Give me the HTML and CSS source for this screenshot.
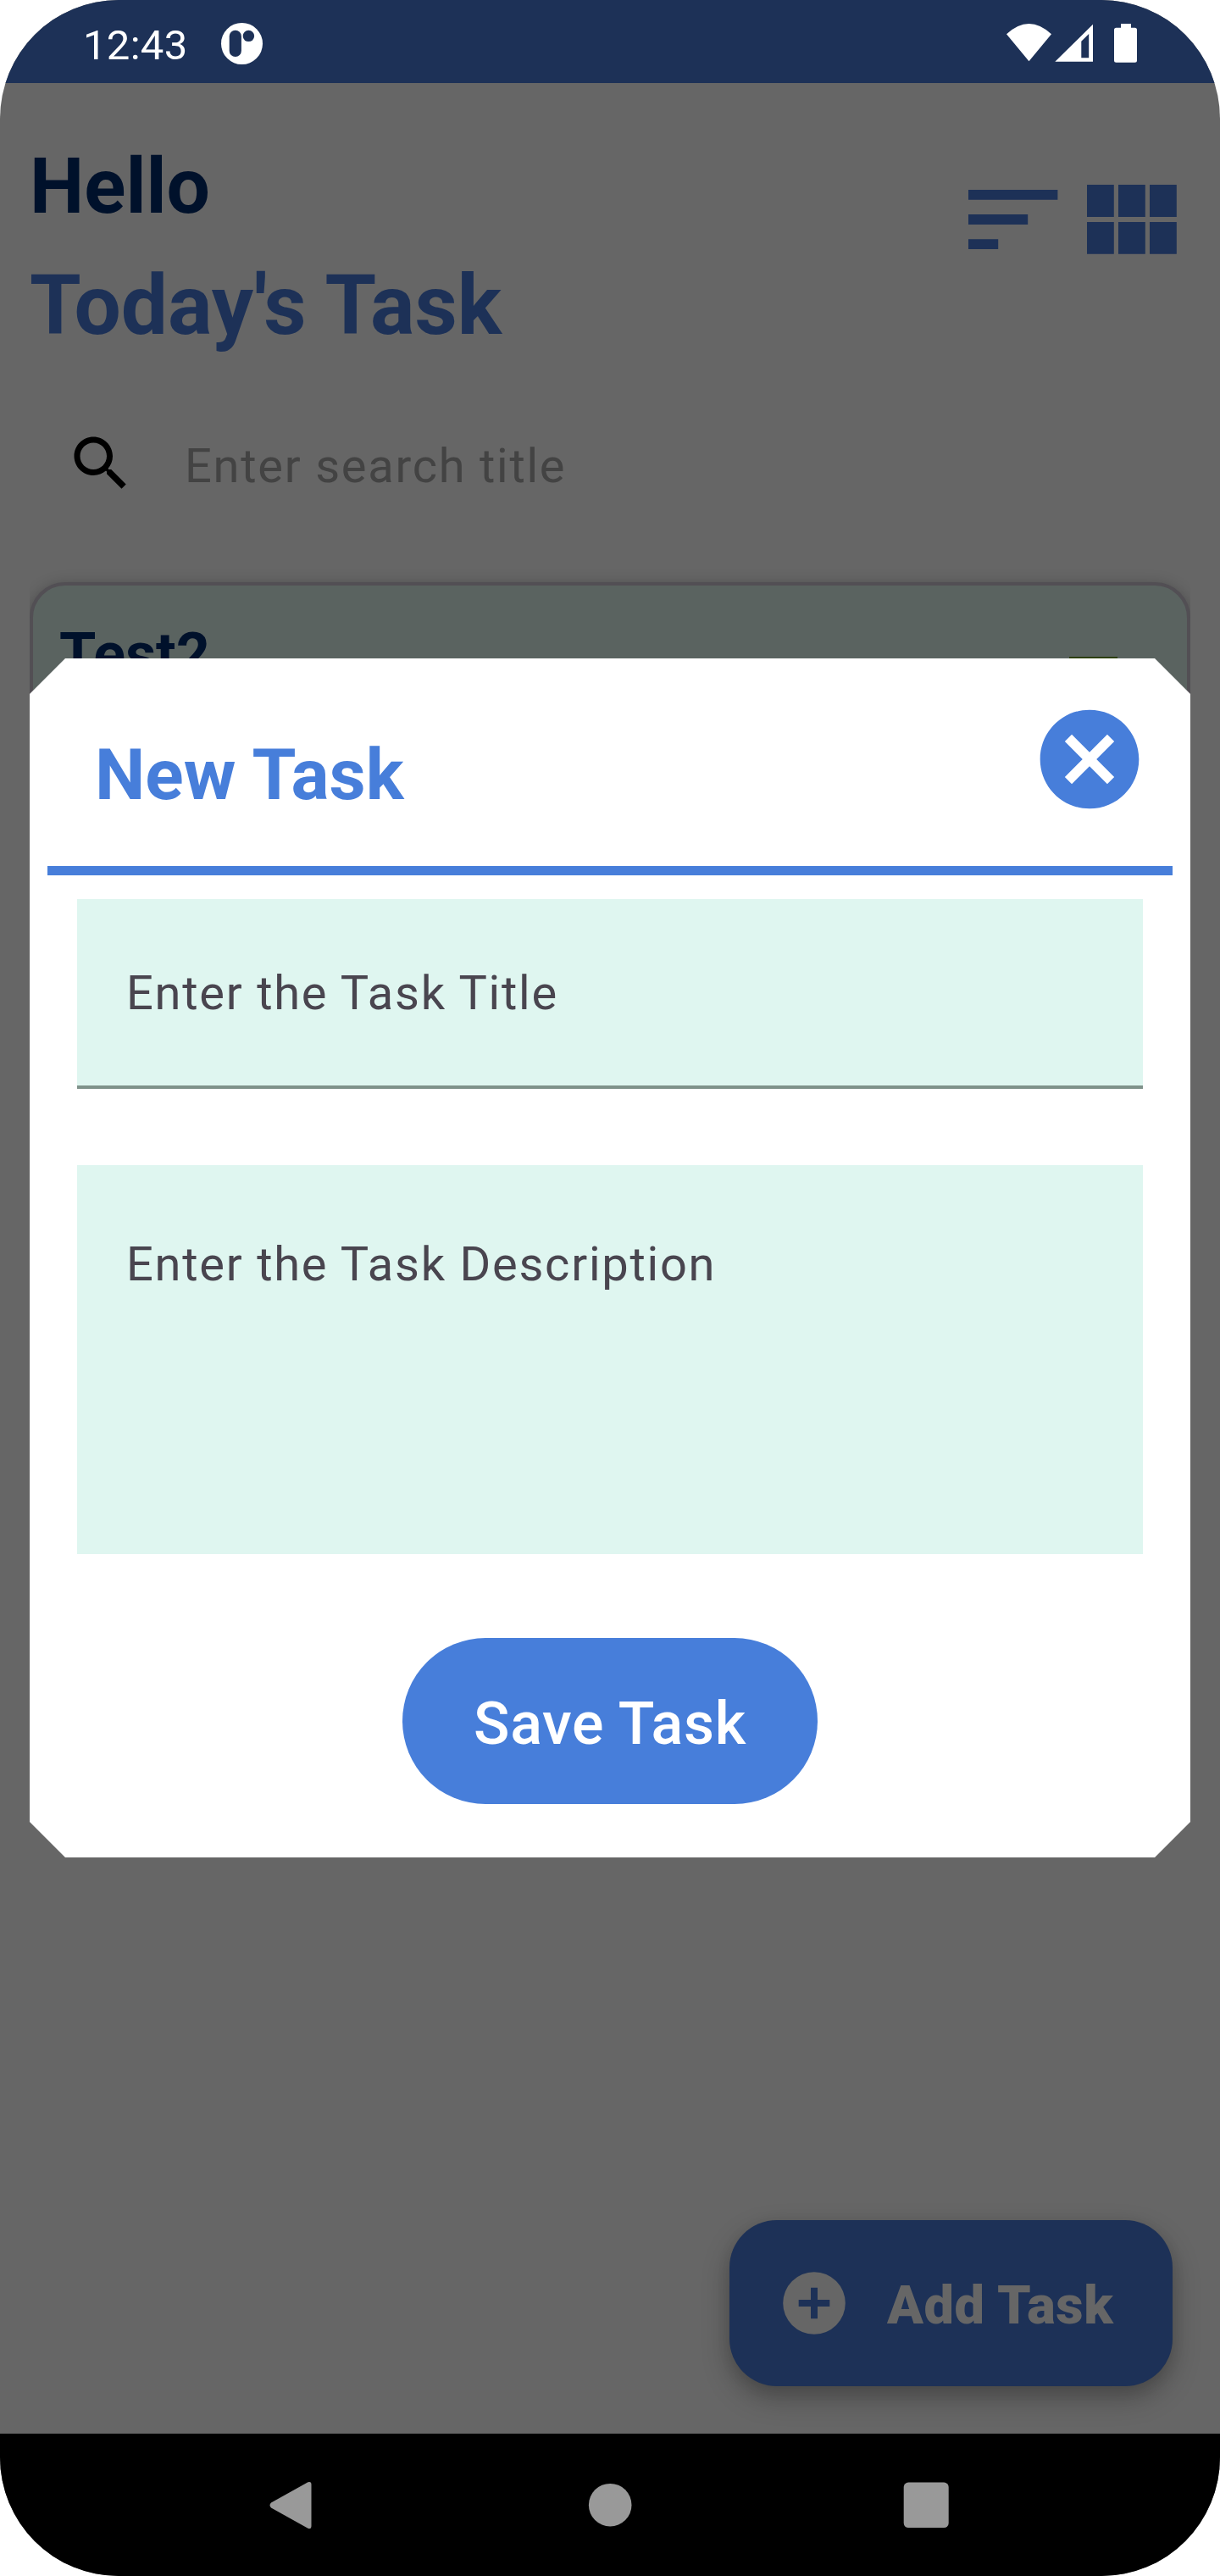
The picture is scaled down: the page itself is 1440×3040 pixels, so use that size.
FILE: index.html
```html
<!DOCTYPE html>
<html lang="en">
<head>
<meta charset="utf-8">
<title>Today's Task</title>
<link rel="stylesheet" href="styles.css">
</head>
<body>
<div class="phone">
  <header class="status">
    <span class="clock">12:43</span>
    <svg class="status-app" viewBox="0 0 49 49"><circle cx="24.5" cy="24.5" r="24.5" fill="#fff"/><rect x="9.7" y="8.7" width="14.2" height="31.3" rx="7.1" fill="#1d3157"/><circle cx="32.4" cy="15.4" r="6.7" fill="#1d3157"/></svg>
    <svg class="status-icons" viewBox="0 0 154 46" fill="#fff"><path d="M0 12.3Q26.500-12.300 53 12.300L26.500 44.300Z"/><path fill-rule="evenodd" d="M102 0.800V44.700H57.300ZM88.300 20.700V40.300H97.200V12Z"/><path d="M135 0H147V4.700H151.500Q154 4.700 154 7.200V43.200Q154 45.700 151.500 45.700H129.500Q127 45.700 127 43.200V7.200Q127 4.700 129.500 4.700H135Z"/></svg>
  </header>
  <main class="screen">
    <div class="top">
      <div>
        <h1 class="hello">Hello</h1>
        <h2 class="today">Today's Task</h2>
      </div>
      <div class="actions">
        <svg class="sort" viewBox="0 0 105.400 70"><path d="M0 0H105.400V11.700H0ZM0 29.100H70.200V40.900H0ZM0 58.200H35.200V70H0Z"/></svg>
        <svg class="grid" viewBox="0 0 106 82"><path d="M0 0H31.800V38H0ZM37 0H68.800V38H37ZM74 0H105.800V38H74ZM0 44H31.800V81.800H0ZM37 44H68.800V81.800H37ZM74 44H105.800V81.800H74Z"/></svg>
      </div>
    </div>
    <div class="search">
      <svg viewBox="0 0 24 24"><path d="M15.500 14h-.79l-.28-.27C15.410 12.590 16 11.110 16 9.500 16 5.910 13.090 3 9.500 3S3 5.910 3 9.500 5.910 16 9.500 16c1.610 0 3.090-.59 4.230-1.570l.27.28v.79l5 4.990L20.490 19l-4.990-5zm-6 0C7.010 14 5 11.990 5 9.500S7.010 5 9.500 5 14 7.010 14 9.500 11.990 14 9.500 14z"/></svg>
      <span>Enter search title</span>
    </div>
    <div class="list">
      <article class="card">
        <h3>Test2</h3>
        <svg class="delete" viewBox="0 0 57 12"><path d="M0 0H57V12H0Z"/></svg>
      </article>
    </div>
    <button class="fab">
      <svg viewBox="0 0 74 74"><circle cx="37" cy="37" r="36.800" fill="#666"/><path d="M33 18.700H41V33H55.300V41H41V55.300H33V41H18.700V33H33Z" fill="#1d3157"/></svg>
      <span>Add Task</span>
    </button>
    <section class="dialog">
      <div class="dialog-head">
        <h2>New Task</h2>
        <svg viewBox="0 0 24 24"><path d="M12 2C6.470 2 2 6.470 2 12s4.470 10 10 10 10-4.470 10-10S17.530 2 12 2zm5 13.590L15.590 17 12 13.410 8.410 17 7 15.590 10.590 12 7 8.410 8.410 7 12 10.590 15.590 7 17 8.410 13.410 12 17 15.590z"/></svg>
      </div>
      <div class="rule"></div>
      <div class="field title-field">Enter the Task Title</div>
      <div class="field desc-field">Enter the Task Description</div>
      <button class="save">Save Task</button>
    </section>
  </main>
  <nav class="nav">
    <svg viewBox="0 0 57 57"><path d="M1 25.500L44.500 1.200Q48.500 0 48.500 4V53Q48.500 57 44.500 55.800L1 31.500Q-2 28.500 1 25.500Z"/></svg>
    <svg viewBox="0 0 57 57"><circle cx="28.200" cy="28.200" r="25.300"/></svg>
    <svg viewBox="0 0 57 57"><rect x="1.700" y="1.600" width="53" height="53.400" rx="5.500"/></svg>
  </nav>
</div>
</body>
</html>
```

FILE: styles.css
```css
* { box-sizing: border-box; }
body { margin: 0; background: #fff; font-family: Roboto, "Liberation Sans", sans-serif; }
h1, h2, h3 { margin: 0; font-weight: 700; white-space: nowrap; }
svg { display: block; flex: none; overflow: visible; }
button { border: 0; font-family: inherit; white-space: nowrap; }

.phone {
  width: 1440px;
  height: 3040px;
  border-radius: 140px;
  overflow: hidden;
  display: flex;
  flex-direction: column;
  background: #666;
}

.status {
  height: 98px;
  background: #1d3157;
  color: #fff;
  display: flex;
  align-items: flex-start;
  padding: 27px 98px 0;
}
.clock { width: 163px; font-size: 49px; line-height: 53px; letter-spacing: .3px; }
.status-app { width: 49px; height: 49px; }
.status-icons { width: 154px; height: 46px; margin: 1px 0 0 auto; }

.screen { position: relative; height: 2774px; }

.top {
  display: flex;
  justify-content: space-between;
  padding: 61px 51.500px 0 35px;
}
.hello { font-size: 91px; line-height: 122px; color: #00112b; }
.today { font-size: 98px; line-height: 141px; margin-top: 9px; color: #1d3157; }
.actions { display: flex; gap: 34.300px; padding-top: 59px; fill: #1d3157; }
.sort { width: 105.400px; height: 70px; margin-top: 6px; }
.grid { width: 106px; height: 82px; }

.search {
  display: flex;
  margin: 74px 0 0 77px;
  gap: 57px;
}
.search svg { width: 84px; height: 84px; }
.search span {
  font-size: 56px;
  line-height: 91px;
  letter-spacing: 1.750px;
  color: #434343;
}

.list {
  margin: 54px 35px 0;
  height: 1000px;
  padding-top: 37px;
  overflow: hidden;
}
.card {
  height: 560px;
  border: 4px solid #524f54;
  border-radius: 42px;
  background: #5a6360;
  box-shadow: 0 4px 18px rgba(0, 0, 0, .3);
  display: flex;
  justify-content: space-between;
  padding: 40px 82px 0 31px;
}
.card h3 { font-size: 70px; line-height: 82px; color: #00112b; }
.delete { width: 57px; height: 12px; margin-top: 43.500px; fill: #2c3f0c; }

.fab {
  position: absolute;
  right: 56px;
  bottom: 56px;
  width: 523px;
  height: 196px;
  border-radius: 56px;
  background: #1d3157;
  color: #666;
  box-shadow: 0 14px 32px rgba(0, 0, 0, .28), 0 4px 16px rgba(0, 0, 0, .08);
  display: flex;
  align-items: center;
  padding: 0 0 0 63px;
  gap: 49px;
}
.fab svg { width: 74px; height: 74px; }
.fab span { font-size: 63px; font-weight: 900; line-height: 74px; letter-spacing: .6px; padding-top: 5px; }

.dialog {
  position: absolute;
  left: 35px;
  top: 679px;
  width: 1370px;
  height: 1415px;
  background: #fff;
  clip-path: polygon(42px 0, 1328px 0, 100% 42px, 100% 1373px, 1328px 100%, 42px 100%, 0 1373px, 0 42px);
}
.dialog-head {
  height: 245px;
  display: flex;
  justify-content: space-between;
  padding: 49px 49px 0 77px;
}
.dialog-head h2 { font-size: 84px; line-height: 98px; padding-top: 40px; letter-spacing: .1px; color: #477eda; }
.dialog-head svg { width: 140px; height: 140px; fill: #477eda; }
.rule { height: 11px; margin: 0 21px; background: #477eda; }
.field {
  margin: 28px 56px 0;
  padding: 0 58px;
  background: #dff6f0;
  color: #49454f;
  font-size: 56px;
  letter-spacing: 1.750px;
  white-space: nowrap;
}
.title-field { height: 224px; line-height: 222px; border-bottom: 4px solid #7f928a; }
.desc-field { height: 459px; margin-top: 90px; padding-top: 84px; line-height: 66px; }
.save {
  display: block;
  width: 490px;
  height: 196px;
  margin: 99px auto 0;
  padding: 6px 0 0;
  border-radius: 98px;
  background: #477eda;
  color: #fff;
  font-size: 70px;
  font-weight: 500;
  letter-spacing: .7px;
}

.nav {
  height: 168px;
  background: #000;
  fill: #999;
  display: flex;
  justify-content: center;
  align-items: center;
  gap: 316px;
}
.nav svg { width: 57px; height: 57px; }
```
